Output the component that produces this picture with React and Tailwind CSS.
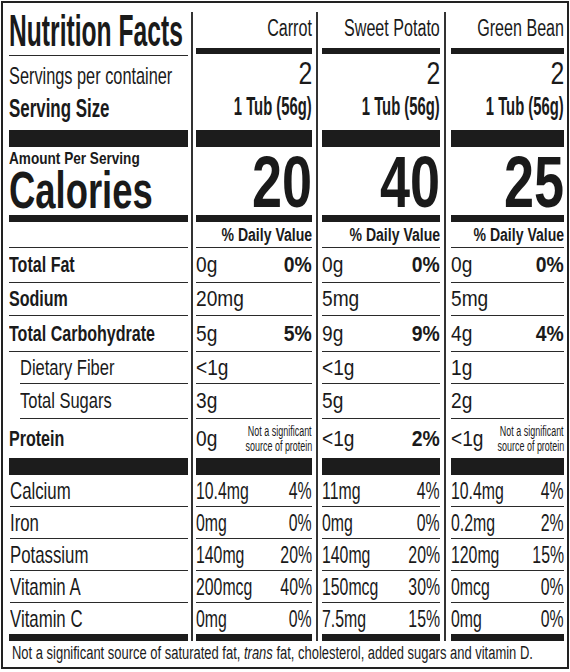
import React from "react";

const NOTE = "note";

const COLUMNS = [
  {
    name: "Carrot",
    w: "w-[116px]",
    cal: "20",
    nutrients: [["0g", "0%"], ["20mg"], ["5g", "5%"], ["<1g"], ["3g"], ["0g", NOTE]],
    vitamins: [["10.4mg", "4%"], ["0mg", "0%"], ["140mg", "20%"], ["200mcg", "40%"], ["0mg", "0%"]],
  },
  {
    name: "Sweet Potato",
    w: "w-[118px]",
    cal: "40",
    nutrients: [["0g", "0%"], ["5mg"], ["9g", "9%"], ["<1g"], ["5g"], ["<1g", "2%"]],
    vitamins: [["11mg", "4%"], ["0mg", "0%"], ["140mg", "20%"], ["150mcg", "30%"], ["7.5mg", "15%"]],
  },
  {
    name: "Green Bean",
    w: "w-[113px]",
    cal: "25",
    nutrients: [["0g", "0%"], ["5mg"], ["4g", "4%"], ["1g"], ["2g"], ["<1g", NOTE]],
    vitamins: [["10.4mg", "4%"], ["0.2mg", "2%"], ["120mg", "15%"], ["0mcg", "0%"], ["0mg", "0%"]],
  },
];

const NUTRIENTS = [
  { label: "Total Fat", bold: true },
  { label: "Sodium", bold: true },
  { label: "Total Carbohydrate", bold: true },
  { label: "Dietary Fiber", indent: true },
  { label: "Total Sugars", indent: true },
  { label: "Protein", bold: true },
];
const VITAMINS = ["Calcium", "Iron", "Potassium", "Vitamin A", "Vitamin C"];

const NUT_H = ["h-[35px]", "h-[33px]", "h-[36px]", "h-[32px]", "h-[35px]", "h-[39px]"];
const VIT_H = ["h-[32px]", "h-[32px]", "h-[32px]", "h-[32px]", "h-[31px]"];
const LINE = "border-b border-[#2a2a2a]";

// condensed look: Liberation Sans squeezed horizontally.
// wrapped in a zero-width box so the unscaled width never pushes layout around
function Txt({ c = "scale-x-[0.7]", right = false, children }) {
  return (
    <div className={right ? "w-0 flex justify-end" : "w-0"}>
      <span className={`inline-block whitespace-nowrap ${right ? "origin-right" : "origin-left"} ${c}`}>{children}</span>
    </div>
  );
}

function Bar({ h }) {
  return <div className={`${h} bg-[#1c1c1c]`} />;
}

function Divider({ className }) {
  return <div className={`w-[2px] mt-[9px] bg-[#333] ${className}`} />;
}

function LabelColumn() {
  return (
    <div className="w-[179px] ml-[6px] flex flex-col">
      <div className={`h-[53px] pt-[6px] text-[44px] leading-none font-bold ${LINE}`}>
        <Txt c="scale-x-[0.56]">Nutrition Facts</Txt>
      </div>
      <div className="h-[74px] pt-[8px]">
        <div className="text-[24px] leading-none">
          <Txt c="scale-x-[0.68]">Servings per container</Txt>
        </div>
        <div className="mt-[7px] text-[26px] leading-none font-bold">
          <Txt c="scale-x-[0.65]">Serving Size</Txt>
        </div>
      </div>
      <Bar h="h-[17px]" />
      <div className="h-[68px] pt-[3px]">
        <div className="text-[17px] leading-none font-bold">
          <Txt c="scale-x-[0.8]">Amount Per Serving</Txt>
        </div>
        <div className="-mt-[3px] text-[52px] leading-none font-bold">
          <Txt c="scale-x-[0.7]">Calories</Txt>
        </div>
      </div>
      <Bar h="h-[7px]" />
      <div className={`h-[26px] ${LINE}`} />
      {NUTRIENTS.map((n, i) => (
        <div
          key={n.label}
          className={`${NUT_H[i]} flex items-center text-[22px] leading-none ${i < 5 ? LINE : ""} ${n.indent ? "ml-[11px]" : ""} ${n.bold ? "font-bold" : ""}`}
        >
          <Txt c={n.bold ? "scale-x-[0.73]" : "scale-x-[0.75]"}>{n.label}</Txt>
        </div>
      ))}
      <Bar h="h-[17px]" />
      {VITAMINS.map((v, i) => (
        <div key={v} className={`${VIT_H[i]} flex items-center ml-px text-[24px] leading-none ${i < 4 ? LINE : ""}`}>
          <Txt c="scale-x-[0.7]">{v}</Txt>
        </div>
      ))}
      <Bar h="h-[7px]" />
    </div>
  );
}

function ProteinNote() {
  return (
    <div className="w-0 flex flex-col items-end text-[14px] leading-[15px]">
      <span className="inline-block whitespace-nowrap origin-right scale-x-[0.64]">Not a significant</span>
      <span className="inline-block whitespace-nowrap origin-right scale-x-[0.64]">source of protein</span>
    </div>
  );
}

function FoodColumn({ col }) {
  return (
    <div className={`${col.w} flex flex-col`}>
      <div className="h-[45px] pt-[14px] flex justify-end text-[23px] leading-none">
        <Txt right c="scale-x-[0.7]">{col.name}</Txt>
      </div>
      <Bar h="h-[6px]" />
      <div className="h-[76px] pt-[4px]">
        <div className="flex justify-end text-[31px] leading-none">
          <Txt right c="scale-x-[0.8]">2</Txt>
        </div>
        <div className="mt-[4px] flex justify-end text-[26px] leading-none font-bold">
          <Txt right c="scale-x-[0.57]">1 Tub (56g)</Txt>
        </div>
      </div>
      <Bar h="h-[17px]" />
      <div className="h-[68px]">
        <div className="-mt-px flex justify-end text-[72px] leading-none font-bold">
          <Txt right c="scale-x-[0.75]">{col.cal}</Txt>
        </div>
      </div>
      <Bar h="h-[7px]" />
      <div className={`h-[26px] pt-[4px] flex justify-end text-[18px] leading-none font-bold ${LINE}`}>
        <Txt right c="scale-x-[0.78]">% Daily Value</Txt>
      </div>
      {col.nutrients.map(([amt, pct], i) => (
        <div key={i} className={`${NUT_H[i]} flex items-center justify-between text-[22px] leading-none ${i < 5 ? LINE : ""}`}>
          <Txt c="scale-x-[0.87]">{amt}</Txt>
          {pct === NOTE ? (
            <ProteinNote />
          ) : pct ? (
            <div className="font-bold">
              <Txt right c="scale-x-[0.88]">{pct}</Txt>
            </div>
          ) : null}
        </div>
      ))}
      <Bar h="h-[17px]" />
      {col.vitamins.map(([amt, pct], i) => (
        <div key={i} className={`${VIT_H[i]} flex items-center justify-between text-[24px] leading-none ${i < 4 ? LINE : ""}`}>
          <Txt c="scale-x-[0.66]">{amt}</Txt>
          <Txt right c="scale-x-[0.66]">{pct}</Txt>
        </div>
      ))}
      <Bar h="h-[7px]" />
    </div>
  );
}

export default function App() {
  return (
    <div className="w-[570px] h-[672px] bg-white">
      <div className="ml-px mt-px w-[568px] h-[668px] border-2 border-[#222] overflow-hidden flex flex-col text-[#1a1a1a] font-['Liberation_Sans',Arial,sans-serif]">
        <div className="flex">
          <LabelColumn />
          <Divider className="ml-[3px] mr-[3px]" />
          <FoodColumn col={COLUMNS[0]} />
          <Divider className="ml-[4px] mr-[4px]" />
          <FoodColumn col={COLUMNS[1]} />
          <Divider className="ml-[4px] mr-[5px]" />
          <FoodColumn col={COLUMNS[2]} />
        </div>
        <div className="flex-1 pl-[9px] pt-[3px] text-[18px] leading-none">
          <Txt c="scale-x-[0.72]">
            Not a significant source of saturated fat, <i>trans</i> fat, cholesterol, added sugars and vitamin D.
          </Txt>
        </div>
      </div>
    </div>
  );
}
